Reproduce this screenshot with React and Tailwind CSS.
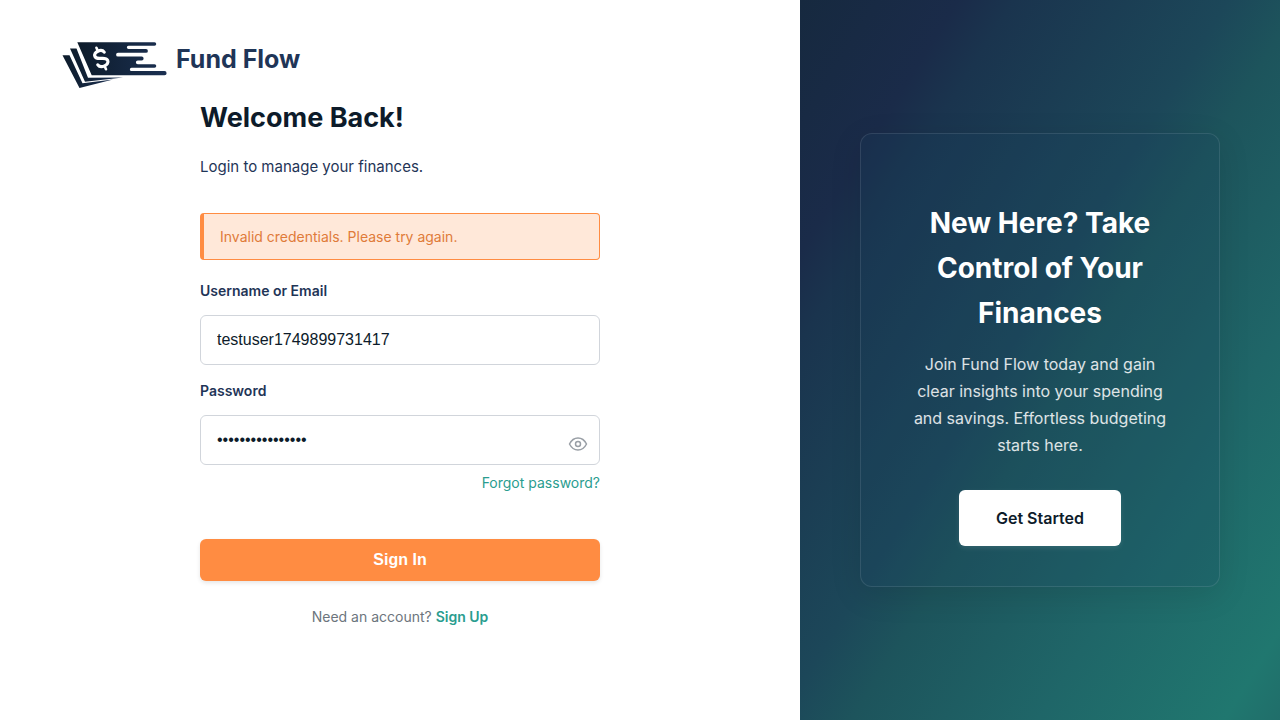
function Logo() {
  return (
    <svg width="108" height="66" viewBox="0 -10 108 66" className="h-[66px] w-[108px]" aria-hidden="true">
      <defs>
        <linearGradient id="bill" x1="0" y1="0" x2="1" y2="0">
          <stop offset="0" stopColor="#0d1b2a" />
          <stop offset="1" stopColor="#1b3052" />
        </linearGradient>
      </defs>
      <g fill="url(#bill)">
        <path d="M2.500 19.300H9.500L22.500 47.300L53 43.500L19.500 52Z" />
        <path d="M10 12.500H16.500L28 41.800L63 41.500L25 45.800Z" />
        <path d="M17.300 6.200H94.500A1.750 1.750 0 0 1 94.500 9.700H68.500A1.650 1.650 0 0 0 68.500 13H86A1.900 1.900 0 0 1 86 16.800H58A1.900 1.900 0 0 0 58 20.600H81.700A1.900 1.900 0 0 1 81.700 24.400H77.800A1.900 1.900 0 0 0 77.800 28.200H94.500A1.800 1.800 0 0 1 94.500 31.800H71.500A1.650 1.650 0 0 0 71.500 35.100H104.500A2.100 2.100 0 0 1 104.500 39.300H31.700Z" />
      </g>
      <g transform="rotate(-24 41 22.500)" fill="none" stroke="#fff" strokeLinecap="round">
        <path d="M46.500 18C45.500 13.300 36.300 13.300 36.300 18.200C36.300 23.300 46.300 21.700 46.300 27C46.300 32 36.500 31.900 35.500 27" strokeWidth="3.200" />
        <path d="M41.200 10.800V14.500M41.200 31V34.300" strokeWidth="2.600" />
      </g>
    </svg>
  );
}

export default function App() {
  return (
    <div className="flex min-h-screen bg-white font-['Inter',sans-serif] text-[#0d1b2a]">
      <main className="w-5/8 px-[60px] pt-[26px]">
        <header className="flex items-center gap-2">
          <Logo />
          <span className="text-[25px] font-bold leading-10 text-[#1f3557]">Fund Flow</span>
        </header>

        <div className="mx-auto max-w-[400px]">
          <h1 className="pt-[5px] text-[27px] font-bold leading-[42px]">Welcome Back!</h1>
          <p className="mt-4 text-[15px] leading-6 text-[#1f3557]">Login to manage your finances.</p>

          <div role="alert" className="mt-[34px] rounded border border-l-4 border-[#ff8c42] bg-[#ffe8d9] px-4 py-3 text-sm leading-[21px] text-[#e07b39]">
            Invalid credentials. Please try again.
          </div>

          <form className="mt-5" onSubmit={(e) => e.preventDefault()}>
            <label htmlFor="user" className="block text-sm font-semibold leading-[22px] text-[#1f3557]">Username or Email</label>
            <input id="user" defaultValue="testuser1749899731417" className="mt-[13px] block h-[50px] w-full rounded-md border border-[#d1d5db] px-4 font-['Liberation_Sans',sans-serif] text-base" />
            <label htmlFor="pass" className="mt-[15px] block text-sm font-semibold leading-[22px] text-[#1f3557]">Password</label>
            <div className="relative mt-[13px]">
              <input id="pass" type="password" defaultValue="flow-cash-budget" className="block h-[50px] w-full rounded-md border border-[#d1d5db] px-4 font-['Liberation_Sans',sans-serif] text-base" />
              <button type="button" aria-label="Show password" className="absolute right-3 top-5">
                <svg width="20" height="18" viewBox="0 0 20 18" fill="none" stroke="#999fa6" strokeWidth="1.5">
                  <path d="M1.500 9C3 6 6 3 10 3S17 6 18.500 9C17 12 14 15 10 15S3 12 1.500 9Z" />
                  <circle cx="10" cy="9" r="2.500" />
                </svg>
              </button>
            </div>
            <div className="mt-[7px] text-right text-sm leading-[22px]">
              <a href="#forgot" className="text-[#2a9d8f]">Forgot password?</a>
            </div>
            <button type="submit" className="mt-[45px] block h-[42px] w-full rounded-md bg-[#ff8c42] font-['Liberation_Sans',sans-serif] text-base font-bold text-white shadow-[0_2px_4px_rgba(0,0,0,0.1)]">Sign In</button>
          </form>
          <p className="mt-[25px] text-center text-sm leading-[22px] text-[#6c757d]">
            Need an account? <a href="#signup" className="font-semibold text-[#2a9d8f]">Sign Up</a>
          </p>
        </div>
      </main>

      <aside className="flex w-3/8 items-center justify-center bg-[linear-gradient(122deg,#16293f_0%,#1a2b49_17%,#1a344e_23%,#1c4759_46%,#1d545c_54%,#1f6668_74%,#20776f_94%,#206e6a_100%)] px-[60px]">
        <section className="w-full rounded-xl border border-white/10 bg-[#1b3f5e]/20 px-[50px] pb-10 pt-[67px] text-center text-white shadow-[0_8px_32px_rgba(0,0,0,0.1)]">
          <h2 className="text-[28px] font-bold leading-[45px]">New Here? Take Control of Your Finances</h2>
          <p className="mt-[15px] text-base leading-[27px] text-white/85">Join Fund Flow today and gain clear insights into your spending and savings. Effortless budgeting starts here.</p>
          <button type="button" className="mt-[31px] h-14 rounded-md bg-white px-[37px] text-base font-semibold text-[#0d1b2a] shadow-[0_2px_5px_rgba(255,255,255,0.1)]">Get Started</button>
        </section>
      </aside>
    </div>
  );
}
